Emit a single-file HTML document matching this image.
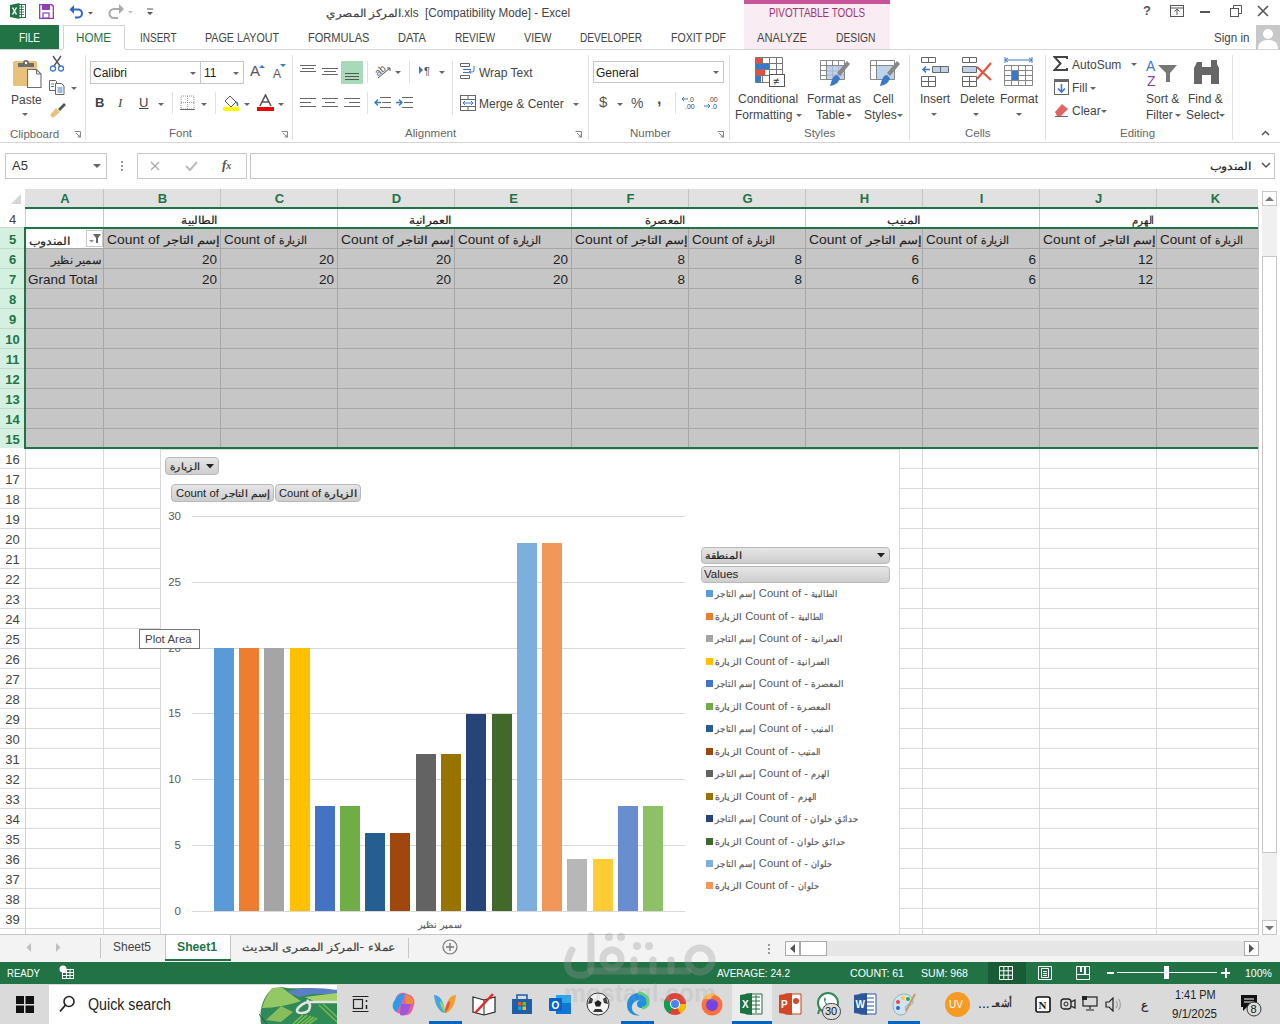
<!DOCTYPE html>
<html><head><meta charset="utf-8">
<style>
*{margin:0;padding:0;box-sizing:border-box}
html,body{width:1280px;height:1024px;overflow:hidden;background:#fff;font-family:"Liberation Sans",sans-serif;color:#444;position:relative}
.a{position:absolute}
.t{position:absolute;white-space:nowrap;font-size:12px;line-height:14px}
.tab{position:absolute;top:26px;height:25px;line-height:25px;font-size:12px;color:#444;white-space:nowrap}
.gl{position:absolute;top:127px;font-size:11.5px;color:#666;white-space:nowrap}
.sep{position:absolute;top:55px;width:1px;height:85px;background:#e1e1e1}
.dd{position:absolute;width:0;height:0;border-left:3px solid transparent;border-right:3px solid transparent;border-top:3px solid #666}
.ch{text-align:center;color:#217346;font-weight:bold;font-size:13px}
.rn{text-align:center;color:#444;font-size:13px}
.rn.sel{color:#217346;font-weight:bold}
.cell{font-size:13.5px;color:#1e1e1e;line-height:15px}
.fbtn{border:1px solid #b9b9b9;border-radius:4px;background:linear-gradient(#e6e6e6,#cdcdcd)}
.fbt{font-size:11.5px;color:#222}
.ylab{font-size:11.5px;color:#595959}
.leg{font-size:11px;color:#595959}
.ar{font-size:0.85em;-webkit-text-stroke:0.2px currentColor}
.ab{display:inline-block;white-space:nowrap}.ab>span{display:inline-block;transform-origin:0 0}
</style></head><body>
<!-- TITLE BAR -->
<div id="title">
 <svg class="a" style="left:10px;top:3px" width="16" height="16" viewBox="0 0 16 16">
  <rect x="6.5" y="1.5" width="9" height="13" fill="#fff" stroke="#217346" stroke-width="1"/>
  <path d="M9 4h5M9 6.5h5M9 9h5M9 11.5h5M11.5 2v12" stroke="#217346" stroke-width="0.9"/>
  <path d="M0 2l9.5-2v16L0 14z" fill="#217346"/>
  <path d="M2.5 4.5l4 7M6.5 4.5l-4 7" stroke="#fff" stroke-width="1.5"/>
 </svg>
 <svg class="a" style="left:39px;top:4px" width="15" height="15" viewBox="0 0 15 15">
  <path d="M0.5 0.5h12l2 2v12h-14z" fill="none" stroke="#8d3fb5" stroke-width="1.6"/>
  <rect x="3" y="1" width="8" height="5" fill="#8d3fb5"/><rect x="4" y="9" width="6" height="5" fill="#fff" stroke="#8d3fb5" stroke-width="1.2"/>
 </svg>
 <svg class="a" style="left:68px;top:3px" width="28" height="16" viewBox="0 0 28 16">
  <path d="M4 6.5h6a4 4 0 0 1 0 8H7" fill="none" stroke="#2b67c6" stroke-width="2"/>
  <path d="M1.5 6.5l4.5-4.5v9z" fill="#2b67c6"/>
  <path d="M20 9h5l-2.5 2.5z" fill="#555"/>
 </svg>
 <svg class="a" style="left:108px;top:3px" width="28" height="16" viewBox="0 0 28 16">
  <path d="M14 6H6a4.5 4.5 0 0 0 0 9h4" fill="none" stroke="#aaa" stroke-width="2"/>
  <path d="M16 6l-5-5v10z" fill="#aaa"/>
  <path d="M20 8h5l-2.5 2.5z" fill="#bbb"/>
 </svg>
 <svg class="a" style="left:145px;top:7px" width="10" height="10" viewBox="0 0 10 10">
  <path d="M2 2h6" stroke="#555" stroke-width="1"/><path d="M2 5h6l-3 3z" fill="#555"/>
 </svg>
 <div class="t fw" style="--w:75.0px;transform:scaleX(0.762);transform-origin:0 0;left:326px;top:6px;font-size:12.5px;color:#444"><span class="ar">المركز المصري</span></div><div class="t fw" style="--w:169.0px;transform:scaleX(0.936);transform-origin:0 0;left:401px;top:6px;font-size:12.5px;color:#444">.xls&nbsp; [Compatibility Mode] - Excel</div>
 <div class="a" style="left:744px;top:0;width:146px;height:49px;background:#f9ecf3"></div>
 <div class="a" style="left:744px;top:0;width:146px;height:4px;background:#c6559a"></div>
 <div class="t fw" style="--w:96.0px;transform:scaleX(0.822);transform-origin:0 0;left:768.5px;top:6px;color:#a3336f;font-size:12px">PIVOTTABLE TOOLS</div>
 <div class="t" style="left:1143px;top:4px;font-size:13px;color:#555;font-weight:bold">?</div>
 <svg class="a" style="left:1170px;top:5px" width="14" height="12" viewBox="0 0 14 12"><rect x="0.5" y="0.5" width="13" height="11" fill="none" stroke="#555"/><path d="M0.5 3h13" stroke="#555"/><path d="M7 4v6M4.5 6.5L7 4l2.5 2.5" fill="none" stroke="#555"/></svg>
 <div class="a" style="left:1200px;top:11px;width:10px;height:2px;background:#555"></div>
 <svg class="a" style="left:1230px;top:5px" width="12" height="12" viewBox="0 0 12 12"><rect x="0.5" y="3.5" width="8" height="8" fill="none" stroke="#555"/><path d="M3.5 3.5v-3h8v8h-3" fill="none" stroke="#555"/></svg>
 <svg class="a" style="left:1257px;top:5px" width="12" height="12" viewBox="0 0 12 12"><path d="M1 1l10 10M11 1L1 11" stroke="#555" stroke-width="1.6"/></svg>
</div>
<!-- TABS -->
<div class="a" style="left:0;top:25px;width:59px;height:25px;background:#217346"></div>
<div class="tab fw" style="--w:21.0px;transform:scaleX(0.829);transform-origin:0 0;left:19px;color:#fff">FILE</div>
<div class="a" style="left:63px;top:25px;width:62px;height:25px;border:1px solid #d4d4d4;border-bottom:none;background:#fff"></div>
<div class="tab fw" style="--w:35.0px;transform:scaleX(0.972);transform-origin:0 0;left:76px;color:#217346">HOME</div>
<div class="tab fw" style="--w:36.5px;transform:scaleX(0.833);transform-origin:0 0;left:140px">INSERT</div>
<div class="tab fw" style="--w:74.0px;transform:scaleX(0.892);transform-origin:0 0;left:205px">PAGE LAYOUT</div>
<div class="tab fw" style="--w:61.5px;transform:scaleX(0.922);transform-origin:0 0;left:308px">FORMULAS</div>
<div class="tab fw" style="--w:28.0px;transform:scaleX(0.926);transform-origin:0 0;left:398px">DATA</div>
<div class="tab fw" style="--w:40.0px;transform:scaleX(0.845);transform-origin:0 0;left:455px">REVIEW</div>
<div class="tab fw" style="--w:27.5px;transform:scaleX(0.897);transform-origin:0 0;left:523.5px">VIEW</div>
<div class="tab fw" style="--w:62.0px;transform:scaleX(0.845);transform-origin:0 0;left:580px">DEVELOPER</div>
<div class="tab fw" style="--w:55.0px;transform:scaleX(0.881);transform-origin:0 0;left:671px">FOXIT PDF</div>
<div class="tab fw" style="--w:50.0px;transform:scaleX(0.929);transform-origin:0 0;left:756.5px">ANALYZE</div>
<div class="tab fw" style="--w:39.5px;transform:scaleX(0.858);transform-origin:0 0;left:836px">DESIGN</div>
<div class="tab fw" style="--w:35.5px;transform:scaleX(0.967);transform-origin:0 0;left:1213.5px">Sign in</div>
<svg class="a" style="left:1256px;top:25px" width="24" height="24" viewBox="0 0 24 24"><rect width="24" height="24" fill="#c8c8c8"/><circle cx="12" cy="9" r="5" fill="#fff"/><path d="M2 24c0-7 5-9 10-9s10 2 10 9z" fill="#fff"/></svg>
<div class="a" style="left:0;top:49px;width:1280px;height:1px;background:#d4d4d4"></div>
<div class="a" style="left:63px;top:49px;width:62px;height:1px;background:#fff"></div>
<div id="grid"><div class="a" style="left:0;top:180px;width:1280px;height:755px;background:#fff"></div>
<div class="a" style="left:25px;top:189px;width:1233px;height:19px;background:#e1e1e1"></div>
<div class="a" style="left:0;top:189px;width:25px;height:19px;background:#fff"></div>
<svg class="a" style="left:10px;top:193px" width="12" height="12"><path d="M11 1v10H1z" fill="#d6d6d6"/></svg>
<div class="a" style="left:103px;top:189px;width:1px;height:19px;background:#c4c4c4"></div>
<div class="t ch" style="left:26px;width:78px;top:192px">A</div>
<div class="a" style="left:220px;top:189px;width:1px;height:19px;background:#c4c4c4"></div>
<div class="t ch" style="left:104px;width:117px;top:192px">B</div>
<div class="a" style="left:337px;top:189px;width:1px;height:19px;background:#c4c4c4"></div>
<div class="t ch" style="left:221px;width:117px;top:192px">C</div>
<div class="a" style="left:454px;top:189px;width:1px;height:19px;background:#c4c4c4"></div>
<div class="t ch" style="left:338px;width:117px;top:192px">D</div>
<div class="a" style="left:571px;top:189px;width:1px;height:19px;background:#c4c4c4"></div>
<div class="t ch" style="left:455px;width:117px;top:192px">E</div>
<div class="a" style="left:688px;top:189px;width:1px;height:19px;background:#c4c4c4"></div>
<div class="t ch" style="left:572px;width:117px;top:192px">F</div>
<div class="a" style="left:805px;top:189px;width:1px;height:19px;background:#c4c4c4"></div>
<div class="t ch" style="left:689px;width:117px;top:192px">G</div>
<div class="a" style="left:922px;top:189px;width:1px;height:19px;background:#c4c4c4"></div>
<div class="t ch" style="left:806px;width:117px;top:192px">H</div>
<div class="a" style="left:1039px;top:189px;width:1px;height:19px;background:#c4c4c4"></div>
<div class="t ch" style="left:923px;width:117px;top:192px">I</div>
<div class="a" style="left:1156px;top:189px;width:1px;height:19px;background:#c4c4c4"></div>
<div class="t ch" style="left:1040px;width:117px;top:192px">J</div>
<div class="a" style="left:1258px;top:189px;width:1px;height:19px;background:#c4c4c4"></div>
<div class="t ch" style="left:1157px;width:117px;top:192px">K</div>
<div class="a" style="left:0;top:228px;width:25px;height:220px;background:#d3f0e0"></div>
<div class="a" style="left:25px;top:228px;width:1233px;height:220px;background:#c6c6c6"></div>
<div class="a" style="left:26px;top:229px;width:77px;height:19px;background:#fff"></div>
<div class="a" style="left:25px;top:248px;width:1233px;height:1px;background:#a6a6a6"></div>
<div class="a" style="left:0;top:248px;width:25px;height:1px;background:#c4d9cc"></div>
<div class="a" style="left:25px;top:268px;width:1233px;height:1px;background:#a6a6a6"></div>
<div class="a" style="left:0;top:268px;width:25px;height:1px;background:#c4d9cc"></div>
<div class="a" style="left:25px;top:288px;width:1233px;height:1px;background:#a6a6a6"></div>
<div class="a" style="left:0;top:288px;width:25px;height:1px;background:#c4d9cc"></div>
<div class="a" style="left:25px;top:308px;width:1233px;height:1px;background:#a6a6a6"></div>
<div class="a" style="left:0;top:308px;width:25px;height:1px;background:#c4d9cc"></div>
<div class="a" style="left:25px;top:328px;width:1233px;height:1px;background:#a6a6a6"></div>
<div class="a" style="left:0;top:328px;width:25px;height:1px;background:#c4d9cc"></div>
<div class="a" style="left:25px;top:348px;width:1233px;height:1px;background:#a6a6a6"></div>
<div class="a" style="left:0;top:348px;width:25px;height:1px;background:#c4d9cc"></div>
<div class="a" style="left:25px;top:368px;width:1233px;height:1px;background:#a6a6a6"></div>
<div class="a" style="left:0;top:368px;width:25px;height:1px;background:#c4d9cc"></div>
<div class="a" style="left:25px;top:388px;width:1233px;height:1px;background:#a6a6a6"></div>
<div class="a" style="left:0;top:388px;width:25px;height:1px;background:#c4d9cc"></div>
<div class="a" style="left:25px;top:408px;width:1233px;height:1px;background:#a6a6a6"></div>
<div class="a" style="left:0;top:408px;width:25px;height:1px;background:#c4d9cc"></div>
<div class="a" style="left:25px;top:428px;width:1233px;height:1px;background:#a6a6a6"></div>
<div class="a" style="left:0;top:428px;width:25px;height:1px;background:#c4d9cc"></div>
<div class="a" style="left:0;top:468px;width:1258px;height:1px;background:#dadada"></div>
<div class="a" style="left:0;top:488px;width:1258px;height:1px;background:#dadada"></div>
<div class="a" style="left:0;top:508px;width:1258px;height:1px;background:#dadada"></div>
<div class="a" style="left:0;top:528px;width:1258px;height:1px;background:#dadada"></div>
<div class="a" style="left:0;top:548px;width:1258px;height:1px;background:#dadada"></div>
<div class="a" style="left:0;top:568px;width:1258px;height:1px;background:#dadada"></div>
<div class="a" style="left:0;top:588px;width:1258px;height:1px;background:#dadada"></div>
<div class="a" style="left:0;top:608px;width:1258px;height:1px;background:#dadada"></div>
<div class="a" style="left:0;top:628px;width:1258px;height:1px;background:#dadada"></div>
<div class="a" style="left:0;top:648px;width:1258px;height:1px;background:#dadada"></div>
<div class="a" style="left:0;top:668px;width:1258px;height:1px;background:#dadada"></div>
<div class="a" style="left:0;top:688px;width:1258px;height:1px;background:#dadada"></div>
<div class="a" style="left:0;top:708px;width:1258px;height:1px;background:#dadada"></div>
<div class="a" style="left:0;top:728px;width:1258px;height:1px;background:#dadada"></div>
<div class="a" style="left:0;top:748px;width:1258px;height:1px;background:#dadada"></div>
<div class="a" style="left:0;top:768px;width:1258px;height:1px;background:#dadada"></div>
<div class="a" style="left:0;top:788px;width:1258px;height:1px;background:#dadada"></div>
<div class="a" style="left:0;top:808px;width:1258px;height:1px;background:#dadada"></div>
<div class="a" style="left:0;top:828px;width:1258px;height:1px;background:#dadada"></div>
<div class="a" style="left:0;top:848px;width:1258px;height:1px;background:#dadada"></div>
<div class="a" style="left:0;top:868px;width:1258px;height:1px;background:#dadada"></div>
<div class="a" style="left:0;top:888px;width:1258px;height:1px;background:#dadada"></div>
<div class="a" style="left:0;top:908px;width:1258px;height:1px;background:#dadada"></div>
<div class="a" style="left:0;top:928px;width:1258px;height:1px;background:#dadada"></div>
<div class="a" style="left:103px;top:449px;width:1px;height:486px;background:#dadada"></div>
<div class="a" style="left:103px;top:248px;width:1px;height:200px;background:#a6a6a6"></div>
<div class="a" style="left:103px;top:228px;width:1px;height:20px;background:#a8a8a8"></div>
<div class="a" style="left:220px;top:449px;width:1px;height:486px;background:#dadada"></div>
<div class="a" style="left:220px;top:248px;width:1px;height:200px;background:#a6a6a6"></div>
<div class="a" style="left:220px;top:228px;width:1px;height:20px;background:#a8a8a8"></div>
<div class="a" style="left:337px;top:449px;width:1px;height:486px;background:#dadada"></div>
<div class="a" style="left:337px;top:248px;width:1px;height:200px;background:#a6a6a6"></div>
<div class="a" style="left:337px;top:228px;width:1px;height:20px;background:#a8a8a8"></div>
<div class="a" style="left:454px;top:449px;width:1px;height:486px;background:#dadada"></div>
<div class="a" style="left:454px;top:248px;width:1px;height:200px;background:#a6a6a6"></div>
<div class="a" style="left:454px;top:228px;width:1px;height:20px;background:#a8a8a8"></div>
<div class="a" style="left:571px;top:449px;width:1px;height:486px;background:#dadada"></div>
<div class="a" style="left:571px;top:248px;width:1px;height:200px;background:#a6a6a6"></div>
<div class="a" style="left:571px;top:228px;width:1px;height:20px;background:#a8a8a8"></div>
<div class="a" style="left:688px;top:449px;width:1px;height:486px;background:#dadada"></div>
<div class="a" style="left:688px;top:248px;width:1px;height:200px;background:#a6a6a6"></div>
<div class="a" style="left:688px;top:228px;width:1px;height:20px;background:#a8a8a8"></div>
<div class="a" style="left:805px;top:449px;width:1px;height:486px;background:#dadada"></div>
<div class="a" style="left:805px;top:248px;width:1px;height:200px;background:#a6a6a6"></div>
<div class="a" style="left:805px;top:228px;width:1px;height:20px;background:#a8a8a8"></div>
<div class="a" style="left:922px;top:449px;width:1px;height:486px;background:#dadada"></div>
<div class="a" style="left:922px;top:248px;width:1px;height:200px;background:#a6a6a6"></div>
<div class="a" style="left:922px;top:228px;width:1px;height:20px;background:#a8a8a8"></div>
<div class="a" style="left:1039px;top:449px;width:1px;height:486px;background:#dadada"></div>
<div class="a" style="left:1039px;top:248px;width:1px;height:200px;background:#a6a6a6"></div>
<div class="a" style="left:1039px;top:228px;width:1px;height:20px;background:#a8a8a8"></div>
<div class="a" style="left:1156px;top:449px;width:1px;height:486px;background:#dadada"></div>
<div class="a" style="left:1156px;top:248px;width:1px;height:200px;background:#a6a6a6"></div>
<div class="a" style="left:1156px;top:228px;width:1px;height:20px;background:#a8a8a8"></div>
<div class="a" style="left:103px;top:208px;width:1px;height:20px;background:#c8c8c8"></div>
<div class="a" style="left:337px;top:208px;width:1px;height:20px;background:#c8c8c8"></div>
<div class="a" style="left:571px;top:208px;width:1px;height:20px;background:#c8c8c8"></div>
<div class="a" style="left:805px;top:208px;width:1px;height:20px;background:#c8c8c8"></div>
<div class="a" style="left:1039px;top:208px;width:1px;height:20px;background:#c8c8c8"></div>
<div class="a" style="left:25px;top:449px;width:1px;height:486px;background:#d0d0d0"></div>
<div class="a" style="left:25px;top:208px;width:1px;height:20px;background:#d0d0d0"></div>
<div class="a" style="left:0;top:227px;width:25px;height:1px;background:#d0d0d0"></div>
<div class="a" style="left:25px;top:207px;width:1233px;height:2px;background:#217346"></div>
<div class="a" style="left:24px;top:227px;width:1234px;height:2px;background:#217346"></div>
<div class="a" style="left:24px;top:447px;width:1234px;height:2px;background:#217346"></div>
<div class="a" style="left:24px;top:227px;width:2px;height:222px;background:#217346"></div>
<div class="t rn" style="left:0;width:25px;top:213px">4</div>
<div class="t rn sel" style="left:0;width:25px;top:233px">5</div>
<div class="t rn sel" style="left:0;width:25px;top:253px">6</div>
<div class="t rn sel" style="left:0;width:25px;top:273px">7</div>
<div class="t rn sel" style="left:0;width:25px;top:293px">8</div>
<div class="t rn sel" style="left:0;width:25px;top:313px">9</div>
<div class="t rn sel" style="left:0;width:25px;top:333px">10</div>
<div class="t rn sel" style="left:0;width:25px;top:353px">11</div>
<div class="t rn sel" style="left:0;width:25px;top:373px">12</div>
<div class="t rn sel" style="left:0;width:25px;top:393px">13</div>
<div class="t rn sel" style="left:0;width:25px;top:413px">14</div>
<div class="t rn sel" style="left:0;width:25px;top:433px">15</div>
<div class="t rn" style="left:0;width:25px;top:453px">16</div>
<div class="t rn" style="left:0;width:25px;top:473px">17</div>
<div class="t rn" style="left:0;width:25px;top:493px">18</div>
<div class="t rn" style="left:0;width:25px;top:513px">19</div>
<div class="t rn" style="left:0;width:25px;top:533px">20</div>
<div class="t rn" style="left:0;width:25px;top:553px">21</div>
<div class="t rn" style="left:0;width:25px;top:573px">22</div>
<div class="t rn" style="left:0;width:25px;top:593px">23</div>
<div class="t rn" style="left:0;width:25px;top:613px">24</div>
<div class="t rn" style="left:0;width:25px;top:633px">25</div>
<div class="t rn" style="left:0;width:25px;top:653px">26</div>
<div class="t rn" style="left:0;width:25px;top:673px">27</div>
<div class="t rn" style="left:0;width:25px;top:693px">28</div>
<div class="t rn" style="left:0;width:25px;top:713px">29</div>
<div class="t rn" style="left:0;width:25px;top:733px">30</div>
<div class="t rn" style="left:0;width:25px;top:753px">31</div>
<div class="t rn" style="left:0;width:25px;top:773px">32</div>
<div class="t rn" style="left:0;width:25px;top:793px">33</div>
<div class="t rn" style="left:0;width:25px;top:813px">34</div>
<div class="t rn" style="left:0;width:25px;top:833px">35</div>
<div class="t rn" style="left:0;width:25px;top:853px">36</div>
<div class="t rn" style="left:0;width:25px;top:873px">37</div>
<div class="t rn" style="left:0;width:25px;top:893px">38</div>
<div class="t rn" style="left:0;width:25px;top:913px">39</div>
<div class="t cell fw" style="--w:36.5px;transform:scaleX(0.530);transform-origin:0 0;left:181px;top:212px"><span class="ar">الطالبية</span></div>
<div class="t cell fw" style="--w:42.5px;transform:scaleX(0.549);transform-origin:0 0;left:409px;top:212px"><span class="ar">العمرانية</span></div>
<div class="t cell fw" style="--w:40.2px;transform:scaleX(0.668);transform-origin:0 0;left:645.3px;top:212px"><span class="ar">المعصرة</span></div>
<div class="t cell fw" style="--w:33.5px;transform:scaleX(0.649);transform-origin:0 0;left:886.5px;top:212px"><span class="ar">المنيب</span></div>
<div class="t cell fw" style="--w:22.0px;transform:scaleX(0.511);transform-origin:0 0;left:1131.5px;top:212px"><span class="ar">الهرم</span></div>
<div class="t cell fw" style="--w:41.0px;transform:scaleX(0.681);transform-origin:0 0;left:28.5px;top:233px"><span class="ar">المندوب</span></div>
<div class="a" style="left:86px;top:230px;width:17px;height:17px;background:#fff;border:1px solid #c8c8c8"></div>
<svg class="a" style="left:88px;top:233px" width="14" height="11" viewBox="0 0 14 11"><path d="M5 1h8l-3 4v5h-2v-5z" fill="#666"/><path d="M1 7h5l-2.5 2.5z" fill="#888"/></svg>
<div class="t cell fw" style="--w:112.5px;transform:scaleX(1.029);transform-origin:0 0;left:106.5px;top:232px">Count of <span class="ar ab" style="width:54.5px"><span style="transform:scaleX(0.676)">إسم التاجر</span></span></div>
<div class="t cell fw" style="--w:82.5px;transform:scaleX(0.999);transform-origin:0 0;left:223.5px;top:232px">Count of <span class="ar ab" style="width:27.8px"><span style="transform:scaleX(0.462)">الزيارة</span></span></div>
<div class="t cell fw" style="--w:112.5px;transform:scaleX(1.029);transform-origin:0 0;left:340.5px;top:232px">Count of <span class="ar ab" style="width:54.5px"><span style="transform:scaleX(0.676)">إسم التاجر</span></span></div>
<div class="t cell fw" style="--w:82.5px;transform:scaleX(0.999);transform-origin:0 0;left:457.5px;top:232px">Count of <span class="ar ab" style="width:27.8px"><span style="transform:scaleX(0.462)">الزيارة</span></span></div>
<div class="t cell fw" style="--w:112.5px;transform:scaleX(1.029);transform-origin:0 0;left:574.5px;top:232px">Count of <span class="ar ab" style="width:54.5px"><span style="transform:scaleX(0.676)">إسم التاجر</span></span></div>
<div class="t cell fw" style="--w:82.5px;transform:scaleX(0.999);transform-origin:0 0;left:691.5px;top:232px">Count of <span class="ar ab" style="width:27.8px"><span style="transform:scaleX(0.462)">الزيارة</span></span></div>
<div class="t cell fw" style="--w:112.5px;transform:scaleX(1.029);transform-origin:0 0;left:808.5px;top:232px">Count of <span class="ar ab" style="width:54.5px"><span style="transform:scaleX(0.676)">إسم التاجر</span></span></div>
<div class="t cell fw" style="--w:82.5px;transform:scaleX(0.999);transform-origin:0 0;left:925.5px;top:232px">Count of <span class="ar ab" style="width:27.8px"><span style="transform:scaleX(0.462)">الزيارة</span></span></div>
<div class="t cell fw" style="--w:112.5px;transform:scaleX(1.029);transform-origin:0 0;left:1042.5px;top:232px">Count of <span class="ar ab" style="width:54.5px"><span style="transform:scaleX(0.676)">إسم التاجر</span></span></div>
<div class="a" style="left:1157px;top:229px;width:101px;height:19px;overflow:hidden"><div class="t cell fw" style="--w:82.5px;transform:scaleX(0.999);transform-origin:0 0;left:2.5px;top:3px">Count of <span class="ar ab" style="width:27.8px"><span style="transform:scaleX(0.462)">الزيارة</span></span></div></div>
<div class="t cell fw" style="--w:50.0px;transform:scaleX(0.694);transform-origin:0 0;left:51px;top:252px"><span class="ar">سمير نظير</span></div>
<div class="t cell" style="left:28px;top:272px">Grand Total</div>
<div class="t cell" style="left:160px;width:57px;top:252px;text-align:right">20</div>
<div class="t cell" style="left:160px;width:57px;top:272px;text-align:right">20</div>
<div class="t cell" style="left:277px;width:57px;top:252px;text-align:right">20</div>
<div class="t cell" style="left:277px;width:57px;top:272px;text-align:right">20</div>
<div class="t cell" style="left:394px;width:57px;top:252px;text-align:right">20</div>
<div class="t cell" style="left:394px;width:57px;top:272px;text-align:right">20</div>
<div class="t cell" style="left:511px;width:57px;top:252px;text-align:right">20</div>
<div class="t cell" style="left:511px;width:57px;top:272px;text-align:right">20</div>
<div class="t cell" style="left:628px;width:57px;top:252px;text-align:right">8</div>
<div class="t cell" style="left:628px;width:57px;top:272px;text-align:right">8</div>
<div class="t cell" style="left:745px;width:57px;top:252px;text-align:right">8</div>
<div class="t cell" style="left:745px;width:57px;top:272px;text-align:right">8</div>
<div class="t cell" style="left:862px;width:57px;top:252px;text-align:right">6</div>
<div class="t cell" style="left:862px;width:57px;top:272px;text-align:right">6</div>
<div class="t cell" style="left:979px;width:57px;top:252px;text-align:right">6</div>
<div class="t cell" style="left:979px;width:57px;top:272px;text-align:right">6</div>
<div class="t cell" style="left:1096px;width:57px;top:252px;text-align:right">12</div>
<div class="t cell" style="left:1096px;width:57px;top:272px;text-align:right">12</div></div>
<div id="chart"><div class="a" style="left:160px;top:449px;width:740px;height:486px;background:#fff;border-left:1px solid #d9d9d9;border-top:1px solid #d9d9d9;border-right:1px solid #d9d9d9"></div>
<div class="a fbtn" style="left:165px;top:457px;width:54px;height:18px"></div>
<div class="t fbt fw" style="--w:30.0px;transform:scaleX(0.585);transform-origin:0 0;left:170px;top:459px"><span class="ar">الزيارة</span></div>
<svg class="a" style="left:206px;top:464px" width="8" height="5"><path d="M0 0h8l-4 4.5z" fill="#222"/></svg>
<div class="a fbtn" style="left:171px;top:484px;width:103px;height:18px"></div>
<div class="t fbt fw" style="--w:93.4px;transform:scaleX(0.987);transform-origin:0 0;left:175.6px;top:486px">Count of <span class="ar ab" style="width:48.0px"><span style="transform:scaleX(0.699)">إسم التاجر</span></span></div>
<div class="a fbtn" style="left:275px;top:484px;width:86px;height:18px"></div>
<div class="t fbt fw" style="--w:78.0px;transform:scaleX(0.967);transform-origin:0 0;left:278.5px;top:486px">Count of <span class="ar ab" style="width:34.0px"><span style="transform:scaleX(0.663)">الزيارة</span></span></div>
<div class="a" style="left:192px;top:911px;width:493px;height:1px;background:#d9d9d9"></div>
<div class="t ylab" style="left:150px;width:31px;top:904px;text-align:right">0</div>
<div class="a" style="left:192px;top:845px;width:493px;height:1px;background:#d9d9d9"></div>
<div class="t ylab" style="left:150px;width:31px;top:838px;text-align:right">5</div>
<div class="a" style="left:192px;top:779px;width:493px;height:1px;background:#d9d9d9"></div>
<div class="t ylab" style="left:150px;width:31px;top:772px;text-align:right">10</div>
<div class="a" style="left:192px;top:713px;width:493px;height:1px;background:#d9d9d9"></div>
<div class="t ylab" style="left:150px;width:31px;top:706px;text-align:right">15</div>
<div class="a" style="left:192px;top:648px;width:493px;height:1px;background:#d9d9d9"></div>
<div class="t ylab" style="left:150px;width:31px;top:641px;text-align:right">20</div>
<div class="a" style="left:192px;top:582px;width:493px;height:1px;background:#d9d9d9"></div>
<div class="t ylab" style="left:150px;width:31px;top:575px;text-align:right">25</div>
<div class="a" style="left:192px;top:516px;width:493px;height:1px;background:#d9d9d9"></div>
<div class="t ylab" style="left:150px;width:31px;top:509px;text-align:right">30</div>
<div class="a" style="left:214px;top:648px;width:20px;height:263px;background:#5b9bd5"></div>
<div class="a" style="left:239px;top:648px;width:20px;height:263px;background:#ed7d31"></div>
<div class="a" style="left:264px;top:648px;width:20px;height:263px;background:#a5a5a5"></div>
<div class="a" style="left:290px;top:648px;width:20px;height:263px;background:#ffc000"></div>
<div class="a" style="left:315px;top:806px;width:20px;height:105px;background:#4472c4"></div>
<div class="a" style="left:340px;top:806px;width:20px;height:105px;background:#70ad47"></div>
<div class="a" style="left:365px;top:833px;width:20px;height:78px;background:#255e91"></div>
<div class="a" style="left:390px;top:833px;width:20px;height:78px;background:#9e480e"></div>
<div class="a" style="left:416px;top:754px;width:20px;height:157px;background:#636363"></div>
<div class="a" style="left:441px;top:754px;width:20px;height:157px;background:#997300"></div>
<div class="a" style="left:466px;top:714px;width:20px;height:197px;background:#264478"></div>
<div class="a" style="left:492px;top:714px;width:20px;height:197px;background:#43682b"></div>
<div class="a" style="left:517px;top:543px;width:20px;height:368px;background:#7cafdd"></div>
<div class="a" style="left:542px;top:543px;width:20px;height:368px;background:#f1975a"></div>
<div class="a" style="left:567px;top:859px;width:20px;height:52px;background:#b7b7b7"></div>
<div class="a" style="left:593px;top:859px;width:20px;height:52px;background:#ffcd33"></div>
<div class="a" style="left:618px;top:806px;width:20px;height:105px;background:#698ed0"></div>
<div class="a" style="left:643px;top:806px;width:20px;height:105px;background:#8cc168"></div>
<div class="t fw" style="--w:44.0px;transform:scaleX(0.750);transform-origin:0 0;left:418px;top:917px;font-size:11px;color:#595959"><span class="ar">سمير نظير</span></div>
<div class="a fbtn" style="left:701px;top:547px;width:189px;height:17px"></div>
<div class="t fbt fw" style="--w:37.0px;transform:scaleX(0.722);transform-origin:0 0;left:705px;top:548px"><span class="ar">المنطقة</span></div>
<svg class="a" style="left:877px;top:553px" width="8" height="5"><path d="M0 0h8l-4 4.5z" fill="#222"/></svg>
<div class="a fbtn" style="left:701px;top:566px;width:189px;height:17px"></div>
<div class="t fbt" style="left:704px;top:567px">Values</div>
<div class="a" style="left:706px;top:590px;width:7px;height:7px;background:#5b9bd5"></div>
<div class="t leg fw" style="--w:123.0px;transform:scaleX(1.017);transform-origin:0 0;left:715px;top:586px"><span class="ar ab" style="width:40.0px"><span style="transform:scaleX(0.609)">إسم التاجر</span></span> Count of - <span class="ar ab" style="width:26.5px"><span style="transform:scaleX(0.473)">الطالبية</span></span></div>
<div class="a" style="left:706px;top:613px;width:7px;height:7px;background:#ed7d31"></div>
<div class="t leg fw" style="--w:109.0px;transform:scaleX(1.019);transform-origin:0 0;left:715px;top:609px"><span class="ar ab" style="width:26.5px"><span style="transform:scaleX(0.540)">الزيارة</span></span> Count of - <span class="ar ab" style="width:26.0px"><span style="transform:scaleX(0.464)">الطالبية</span></span></div>
<div class="a" style="left:706px;top:635px;width:7px;height:7px;background:#a5a5a5"></div>
<div class="t leg fw" style="--w:128.0px;transform:scaleX(1.017);transform-origin:0 0;left:715px;top:631px"><span class="ar ab" style="width:40.0px"><span style="transform:scaleX(0.609)">إسم التاجر</span></span> Count of - <span class="ar ab" style="width:31.5px"><span style="transform:scaleX(0.499)">العمرانية</span></span></div>
<div class="a" style="left:706px;top:658px;width:7px;height:7px;background:#ffc000"></div>
<div class="t leg fw" style="--w:115.0px;transform:scaleX(1.018);transform-origin:0 0;left:715px;top:654px"><span class="ar ab" style="width:26.5px"><span style="transform:scaleX(0.540)">الزيارة</span></span> Count of - <span class="ar ab" style="width:32.0px"><span style="transform:scaleX(0.507)">العمرانية</span></span></div>
<div class="a" style="left:706px;top:680px;width:7px;height:7px;background:#4472c4"></div>
<div class="t leg fw" style="--w:129.0px;transform:scaleX(1.016);transform-origin:0 0;left:715px;top:676px"><span class="ar ab" style="width:40.0px"><span style="transform:scaleX(0.609)">إسم التاجر</span></span> Count of - <span class="ar ab" style="width:32.5px"><span style="transform:scaleX(0.662)">المعصرة</span></span></div>
<div class="a" style="left:706px;top:703px;width:7px;height:7px;background:#70ad47"></div>
<div class="t leg fw" style="--w:116.0px;transform:scaleX(1.018);transform-origin:0 0;left:715px;top:699px"><span class="ar ab" style="width:26.5px"><span style="transform:scaleX(0.540)">الزيارة</span></span> Count of - <span class="ar ab" style="width:33.0px"><span style="transform:scaleX(0.673)">المعصرة</span></span></div>
<div class="a" style="left:706px;top:725px;width:7px;height:7px;background:#255e91"></div>
<div class="t leg fw" style="--w:119.0px;transform:scaleX(1.018);transform-origin:0 0;left:715px;top:721px"><span class="ar ab" style="width:40.0px"><span style="transform:scaleX(0.609)">إسم التاجر</span></span> Count of - <span class="ar ab" style="width:22.5px"><span style="transform:scaleX(0.535)">المنيب</span></span></div>
<div class="a" style="left:706px;top:748px;width:7px;height:7px;background:#9e480e"></div>
<div class="t leg fw" style="--w:106.0px;transform:scaleX(1.020);transform-origin:0 0;left:715px;top:744px"><span class="ar ab" style="width:26.5px"><span style="transform:scaleX(0.540)">الزيارة</span></span> Count of - <span class="ar ab" style="width:23.0px"><span style="transform:scaleX(0.547)">المنيب</span></span></div>
<div class="a" style="left:706px;top:770px;width:7px;height:7px;background:#636363"></div>
<div class="t leg fw" style="--w:115.0px;transform:scaleX(1.018);transform-origin:0 0;left:715px;top:766px"><span class="ar ab" style="width:40.0px"><span style="transform:scaleX(0.609)">إسم التاجر</span></span> Count of - <span class="ar ab" style="width:18.5px"><span style="transform:scaleX(0.528)">الهرم</span></span></div>
<div class="a" style="left:706px;top:793px;width:7px;height:7px;background:#997300"></div>
<div class="t leg fw" style="--w:102.0px;transform:scaleX(1.021);transform-origin:0 0;left:715px;top:789px"><span class="ar ab" style="width:26.5px"><span style="transform:scaleX(0.540)">الزيارة</span></span> Count of - <span class="ar ab" style="width:19.0px"><span style="transform:scaleX(0.542)">الهرم</span></span></div>
<div class="a" style="left:706px;top:815px;width:7px;height:7px;background:#264478"></div>
<div class="t leg fw" style="--w:144.0px;transform:scaleX(1.015);transform-origin:0 0;left:715px;top:811px"><span class="ar ab" style="width:40.0px"><span style="transform:scaleX(0.609)">إسم التاجر</span></span> Count of - <span class="ar ab" style="width:47.5px"><span style="transform:scaleX(0.653)">حدائق حلوان</span></span></div>
<div class="a" style="left:706px;top:838px;width:7px;height:7px;background:#43682b"></div>
<div class="t leg fw" style="--w:131.0px;transform:scaleX(1.016);transform-origin:0 0;left:715px;top:834px"><span class="ar ab" style="width:26.5px"><span style="transform:scaleX(0.540)">الزيارة</span></span> Count of - <span class="ar ab" style="width:48.0px"><span style="transform:scaleX(0.660)">حدائق حلوان</span></span></div>
<div class="a" style="left:706px;top:860px;width:7px;height:7px;background:#7cafdd"></div>
<div class="t leg fw" style="--w:118.0px;transform:scaleX(1.018);transform-origin:0 0;left:715px;top:856px"><span class="ar ab" style="width:40.0px"><span style="transform:scaleX(0.609)">إسم التاجر</span></span> Count of - <span class="ar ab" style="width:21.5px"><span style="transform:scaleX(0.613)">حلوان</span></span></div>
<div class="a" style="left:706px;top:882px;width:7px;height:7px;background:#f1975a"></div>
<div class="t leg fw" style="--w:104.0px;transform:scaleX(1.020);transform-origin:0 0;left:715px;top:878px"><span class="ar ab" style="width:26.5px"><span style="transform:scaleX(0.540)">الزيارة</span></span> Count of - <span class="ar ab" style="width:21.0px"><span style="transform:scaleX(0.599)">حلوان</span></span></div>
<div class="a" style="left:139px;top:629px;width:61px;height:20px;background:#fff;border:1px solid #767676"></div>
<div class="t" style="left:145px;top:632px;font-size:11.5px;color:#444">Plot Area</div></div>
<div id="bottom"><div class="a" style="left:1258px;top:189px;width:22px;height:746px;background:#fff"></div>
<div class="a" style="left:1258px;top:208px;width:1px;height:727px;background:#c6c6c6"></div>
<div class="a" style="left:1262px;top:206px;width:15px;height:714px;background:#f0f0f0"></div>
<div class="a" style="left:1262px;top:191px;width:15px;height:15px;background:#fff;border:1px solid #c6c6c6"></div>
<svg class="a" style="left:1265px;top:196px" width="9" height="5"><path d="M0 5l4.5-4.5L9 5z" fill="#777"/></svg>
<div class="a" style="left:1262px;top:256px;width:15px;height:597px;background:#fff;border:1px solid #c6c6c6"></div>
<div class="a" style="left:1262px;top:920px;width:15px;height:15px;background:#fff;border:1px solid #c6c6c6"></div>
<svg class="a" style="left:1265px;top:926px" width="9" height="5"><path d="M0 0h9L4.5 4.5z" fill="#777"/></svg>
<div class="a" style="left:0;top:934px;width:1258px;height:1px;background:#c6c6c6"></div>
<div class="a" style="left:0;top:935px;width:1280px;height:27px;background:#f3f3f3"></div>
<svg class="a" style="left:26px;top:943px" width="6" height="9"><path d="M5 0v9L0.5 4.5z" fill="#c0c0c0"/></svg>
<svg class="a" style="left:55px;top:943px" width="6" height="9"><path d="M1 0v9l4.5-4.5z" fill="#c0c0c0"/></svg>
<div class="a" style="left:100px;top:938px;width:1px;height:20px;background:#c6c6c6"></div>
<div class="t fw" style="--w:38.0px;transform:scaleX(0.922);transform-origin:0 0;left:113px;top:940px;font-size:13px;color:#444">Sheet5</div>
<div class="a" style="left:165px;top:935px;width:66px;height:26px;background:#fff;border-left:1px solid #c6c6c6;border-right:1px solid #c6c6c6"></div>
<div class="a" style="left:165px;top:959px;width:66px;height:2px;background:#217346"></div>
<div class="t fw" style="--w:40.0px;transform:scaleX(0.938);transform-origin:0 0;left:177px;top:940px;font-size:13px;color:#217346;font-weight:bold">Sheet1</div>
<div class="t fw" style="--w:154.0px;transform:scaleX(0.752);transform-origin:0 0;left:242px;top:940px;font-size:13px;color:#444" dir="rtl"><span class="ar">عملاء</span> -<span class="ar">المركز المصرى الحديث</span></div>
<div class="a" style="left:408px;top:938px;width:1px;height:20px;background:#c6c6c6"></div>
<svg class="a" style="left:442px;top:939px" width="16" height="16"><circle cx="8" cy="8" r="7" fill="none" stroke="#777" stroke-width="1.2"/><path d="M8 4v8M4 8h8" stroke="#777" stroke-width="1.4"/></svg>
<div class="a" style="left:768px;top:944px;width:2px;height:2px;background:#999"></div>
<div class="a" style="left:768px;top:948px;width:2px;height:2px;background:#999"></div>
<div class="a" style="left:768px;top:952px;width:2px;height:2px;background:#999"></div>
<div class="a" style="left:785px;top:941px;width:459px;height:15px;background:#e6e6e6"></div>
<div class="a" style="left:785px;top:941px;width:15px;height:15px;background:#fff;border:1px solid #aaa"></div>
<svg class="a" style="left:790px;top:944px" width="5" height="9"><path d="M5 0v9L0 4.5z" fill="#555"/></svg>
<div class="a" style="left:800px;top:941px;width:27px;height:15px;background:#fff;border:1px solid #aaa"></div>
<div class="a" style="left:1244px;top:941px;width:15px;height:15px;background:#fff;border:1px solid #aaa"></div>
<svg class="a" style="left:1249px;top:944px" width="5" height="9"><path d="M0 0v9l5-4.5z" fill="#555"/></svg>
<div class="a" style="left:0;top:962px;width:1280px;height:22px;background:#217346"></div>
<div class="t fw" style="--w:33.0px;transform:scaleX(0.833);transform-origin:0 0;left:7px;font-size:11.5px;color:#fff;top:966px">READY</div>
<svg class="a" style="left:59px;top:965px" width="15" height="14" viewBox="0 0 15 14"><rect x="3.5" y="4.5" width="11" height="9" fill="none" stroke="#fff"/><path d="M3.5 7.5h11M3.5 10.5h11M7.5 4.5v9M11 4.5v9" stroke="#fff"/><circle cx="4" cy="4" r="3.5" fill="#fff"/></svg>
<div class="t fw" style="--w:73.0px;transform:scaleX(0.874);transform-origin:0 0;left:717px;font-size:11.5px;color:#fff;top:966px">AVERAGE: 24.2</div>
<div class="t fw" style="--w:54.0px;transform:scaleX(0.918);transform-origin:0 0;left:849.5px;font-size:11.5px;color:#fff;top:966px">COUNT: 61</div>
<div class="t fw" style="--w:47.0px;transform:scaleX(0.919);transform-origin:0 0;left:921px;font-size:11.5px;color:#fff;top:966px">SUM: 968</div>
<div class="a" style="left:988px;top:962px;width:38px;height:22px;background:#185c37"></div>
<svg class="a" style="left:999px;top:966px" width="14" height="14"><path d="M0.5 0.5h13v13h-13zM0.5 4.8h13M0.5 9.2h13M4.8 0.5v13M9.2 0.5v13" fill="none" stroke="#fff"/></svg>
<svg class="a" style="left:1038px;top:966px" width="14" height="14"><path d="M0.5 0.5h13v13h-13z" fill="none" stroke="#fff"/><path d="M3.5 2.5h7v9h-7z" fill="none" stroke="#fff"/><path d="M5 5.5h4M5 7.5h4M5 9.5h4" stroke="#fff"/></svg>
<svg class="a" style="left:1076px;top:966px" width="14" height="14"><path d="M0.5 0.5h13v13h-13z" fill="none" stroke="#fff"/><rect x="4" y="0" width="2" height="6" fill="#fff"/><rect x="8" y="0" width="2" height="8" fill="#fff"/><path d="M0 8.5h14" stroke="#fff"/></svg>
<div class="a" style="left:1107px;top:972px;width:7px;height:2px;background:#fff"></div>
<div class="a" style="left:1117px;top:972px;width:100px;height:1px;background:#fff"></div>
<div class="a" style="left:1164px;top:966px;width:5px;height:13px;background:#fff"></div>
<div class="a" style="left:1221px;top:972px;width:9px;height:2px;background:#fff"></div>
<div class="a" style="left:1224.5px;top:968px;width:2px;height:10px;background:#fff"></div>
<div class="t fw" style="--w:27.0px;transform:scaleX(0.918);transform-origin:0 0;left:1244.5px;font-size:11.5px;color:#fff;top:966px">100%</div>
<div class="a" style="left:0;top:984px;width:1280px;height:40px;background:#dadada"></div>
<svg class="a" style="left:16px;top:996px" width="18" height="17"><path d="M0 0h8v8H0zM9.5 0H18v8H9.5zM0 9.5h8V17H0zM9.5 9.5H18V17H9.5z" fill="#111"/></svg>
<div class="a" style="left:49px;top:985px;width:288px;height:39px;background:#fff"></div>
<svg class="a" style="left:59px;top:995px" width="16" height="18"><circle cx="10" cy="6.5" r="5" fill="none" stroke="#222" stroke-width="1.6"/><path d="M6.5 10l-5.5 6.5" stroke="#222" stroke-width="1.8"/></svg>
<div class="t fw" style="--w:83.0px;transform:scaleX(0.889);transform-origin:0 0;left:88px;top:995px;font-size:16px;line-height:19px;color:#222">Quick search</div>
<svg class="a" style="left:259px;top:984px" width="78" height="40" viewBox="0 0 78 40">
<path d="M2 40C0 28 3 14 12 6L22 3C30 5 38 4 46 4L78 7V40Z" fill="#2f8a57"/>
<path d="M3 24C6 14 10 8 13 4L22 3C29 8 34 12 42 17C30 21 16 24 3 24Z" fill="#93c865"/>
<path d="M7 36L22 22L34 28L22 38Z" fill="#86be5e"/>
<path d="M28 8C40 3 60 3 78 6V11C62 9 50 10 40 13Z" fill="#5b7fc4"/>
<path d="M46 13L78 9V18L57 18Z" fill="#a6d06a"/>
<path d="M78 18H50C45 18 39 23 38 26C37 30 47 30 50 26C52 22 51 19 48 16" fill="none" stroke="#e4e4e4" stroke-width="2.6"/>
<path d="M34 40L44 31M38 40L48 31M42 40L52 32M46 40L55 33M50 40L58 34" stroke="#7cbc4a" stroke-width="1.6"/>
<path d="M60 21L78 38M64 20L78 33" stroke="#78b84c" stroke-width="1.6"/>
<path d="M0 30C3 34 6 38 8 40" stroke="#1f5f3f" stroke-width="1" fill="none"/>
</svg>
<svg class="a" style="left:352px;top:996px" width="17" height="16"><path d="M0.5 0.5h16M0.5 15.5h16" stroke="#222" stroke-width="1.2"/><rect x="1.5" y="3.5" width="9" height="9" fill="none" stroke="#222" stroke-width="1.2"/><path d="M14.5 4v2M14.5 9v4" stroke="#222" stroke-width="1.5"/></svg>
<svg class="a" style="left:391px;top:991px" width="26" height="26" viewBox="0 0 26 26"><path d="M5 6c2-4 6-5 9-4l5 2c4 2 5 6 4 10l-2 6c-2 4-6 5-9 4l-5-2c-4-2-5-6-4-10z" fill="#e45fa3"/><path d="M6 6c2-3 5-4 8-3l-4 10-5 8c-3-2-4-5-3-9z" fill="#2f9be8"/><path d="M14 3l6 3c2 2 3 4 2 7l-7 0z" fill="#f08b3b"/><path d="M10 13h10l-3 8c-2 3-5 4-8 3z" fill="#9a57d8"/></svg>
<svg class="a" style="left:432px;top:991px" width="26" height="26" viewBox="0 0 26 26"><path d="M2 4c6 0 10 6 11 18C9 22 3 16 2 4z" fill="#3fa6e8"/><path d="M24 4c-6 0-10 6-11 18 4 0 10-6 11-18z" fill="#f0a030"/><path d="M8 10c3 1 5 6 5 12-3-3-5-7-5-12z" fill="#9bd160"/><path d="M18 10c-3 1-5 6-5 12 3-3 5-7 5-12z" fill="#e5533c"/></svg>
<svg class="a" style="left:471px;top:991px" width="26" height="26" viewBox="0 0 26 26"><path d="M2 6l11 3 11-3v15l-11 3-11-3z" fill="#fff" stroke="#222" stroke-width="1.2"/><path d="M13 9v15" stroke="#222"/><path d="M4 22L22 3" stroke="#e22" stroke-width="2.4"/><path d="M4 4l18 18" stroke="#e22" stroke-width="2.4" opacity="0"/></svg>
<svg class="a" style="left:509px;top:991px" width="26" height="26" viewBox="0 0 26 26"><path d="M3 8h20v15H3z" fill="#1f5fa8"/><path d="M8 8V4h10v4" fill="none" stroke="#1f5fa8" stroke-width="1.6"/><rect x="9" y="11" width="3.5" height="3.5" fill="#f35325"/><rect x="13.5" y="11" width="3.5" height="3.5" fill="#81bc06"/><rect x="9" y="15.5" width="3.5" height="3.5" fill="#05a6f0"/><rect x="13.5" y="15.5" width="3.5" height="3.5" fill="#ffba08"/></svg>
<svg class="a" style="left:547px;top:991px" width="26" height="26" viewBox="0 0 26 26"><path d="M9 4h15v17H9z" fill="#28a8ea"/><path d="M9 12l15 0v11H9z" fill="#0f78d4"/><rect x="2" y="7" width="13" height="13" rx="1" fill="#0a64c8"/><text x="4.5" y="17.5" font-size="10" font-weight="bold" fill="#fff" font-family="Liberation Sans">O</text></svg>
<svg class="a" style="left:585px;top:991px" width="26" height="26" viewBox="0 0 26 26"><circle cx="13" cy="13" r="11" fill="#f4f4f4" stroke="#333"/><path d="M13 9l3.5 2.5-1.3 4h-4.4l-1.3-4z" fill="#222"/><path d="M5 6l3 2-1 4-4 1M21 6l-3 2 1 4 4 1M8 21l2-3h6l2 3" fill="#333"/></svg>
<svg class="a" style="left:624px;top:991px" width="26" height="26" viewBox="0 0 26 26"><path d="M3 14C3 7 8 2 14 2c6 0 10 4 10 9 0 4-3 6-6 6-4 0-5-2-5-4 0-3 3-4 3-4-5 0-9 4-8 9 1 4 5 6 9 6-8 2-14-3-14-10z" fill="#1d8ee6"/><path d="M14 2c6 0 10 4 10 9 0 4-3 6-6 6" fill="none" stroke="#5fd37a" stroke-width="3"/></svg>
<svg class="a" style="left:662px;top:991px" width="26" height="26" viewBox="0 0 26 26"><circle cx="13" cy="13" r="11" fill="#db4437"/><path d="M13 13L2.6 9A11 11 0 0 0 7.5 22.5z" fill="#0f9d58"/><path d="M13 13l5.5 9.5A11 11 0 0 0 24 13z" fill="#fbbc05"/><circle cx="13" cy="13" r="5" fill="#fff"/><circle cx="13" cy="13" r="4" fill="#4285f4"/></svg>
<svg class="a" style="left:699px;top:991px" width="26" height="26" viewBox="0 0 26 26"><circle cx="13" cy="14" r="10.5" fill="#ff7139"/><circle cx="13" cy="14" r="6" fill="#7542e5"/><path d="M4 8c3-6 10-7 14-4-4 0-6 2-6 4" fill="#ffbd4f"/></svg>
<div class="a" style="left:732px;top:984px;width:40px;height:40px;background:#ececec"></div>
<svg class="a" style="left:738px;top:991px" width="26" height="26" viewBox="0 0 26 26"><path d="M8 3h16v20H8z" fill="#fff" stroke="#1e7145"/><path d="M14 6h8M14 10h8M14 14h8M14 18h8M18 4v18" stroke="#1e7145"/><path d="M2 4l12-2v22L2 22z" fill="#1e7145"/><text x="4" y="17" font-size="10" font-weight="bold" fill="#fff" font-family="Liberation Sans">X</text></svg>
<svg class="a" style="left:777px;top:991px" width="26" height="26" viewBox="0 0 26 26"><path d="M8 3h16v20H8z" fill="#fff" stroke="#c43e1c"/><path d="M2 4l13-2v22L2 22z" fill="#d24726"/><text x="4" y="17" font-size="10" font-weight="bold" fill="#fff" font-family="Liberation Sans">P</text><circle cx="19" cy="10" r="3" fill="#d24726"/></svg>
<svg class="a" style="left:815px;top:991px" width="26" height="26" viewBox="0 0 26 26"><circle cx="13" cy="12" r="10" fill="#fff" stroke="#2e8b57" stroke-width="2"/><path d="M3 23l2-6" stroke="#2e8b57" stroke-width="2"/><path d="M9 8c0 5 4 8 8 8l1-2-3-1-1 1c-2-1-3-2-4-4l1-1-1-3z" fill="#2e8b57"/></svg>
<div class="a" style="left:822px;top:1003px;width:19px;height:17px;border-radius:9px;background:#ddd;border:1.5px solid #444"></div>
<div class="t" style="left:825px;top:1004px;font-size:11px;color:#111">30</div>
<svg class="a" style="left:852px;top:991px" width="26" height="26" viewBox="0 0 26 26"><path d="M8 3h16v20H8z" fill="#fff" stroke="#2b579a"/><path d="M14 7h8M14 11h8M14 15h8M14 19h8" stroke="#2b579a"/><path d="M2 4l13-2v22L2 22z" fill="#2b579a"/><text x="3.5" y="17" font-size="10" font-weight="bold" fill="#fff" font-family="Liberation Sans">W</text></svg>
<svg class="a" style="left:890px;top:991px" width="26" height="26" viewBox="0 0 26 26"><path d="M3 14c0-7 6-11 11-11s9 3 9 8c0 3-3 3-5 3-3 0-3 3-2 5 1 3-2 5-5 5-5 0-8-4-8-10z" fill="#cfe3f3" stroke="#7aa" stroke-width="0.8"/><circle cx="8" cy="11" r="2" fill="#e44"/><circle cx="13" cy="7" r="2" fill="#fc3"/><circle cx="18" cy="8" r="2" fill="#3a3"/><circle cx="8" cy="17" r="2" fill="#36c"/><path d="M16 20L25 3" stroke="#c96" stroke-width="2"/></svg>
<div class="a" style="left:429px;top:1021px;width:33px;height:3px;background:#0067c0"></div>
<div class="a" style="left:621px;top:1021px;width:33px;height:3px;background:#0067c0"></div>
<div class="a" style="left:732px;top:1021px;width:40px;height:3px;background:#0067c0"></div>
<div class="a" style="left:888px;top:1021px;width:32px;height:3px;background:#0067c0"></div>
<div class="a" style="left:945px;top:992px;width:25px;height:25px;border-radius:50%;background:#f59b22"></div>
<div class="t" style="left:949px;top:998px;font-size:10px;color:#fff">UV</div>
<div class="t" style="left:978px;top:996px;font-size:14px;color:#222">...</div><div class="t fw" style="--w:20.0px;transform:scaleX(0.561);transform-origin:0 0;left:992px;top:995px;font-size:14px;color:#222"><span class="ar">أشعـ</span></div>
<svg class="a" style="left:1035px;top:996px" width="16" height="17"><rect x="1" y="1" width="14" height="15" rx="2" fill="#fff" stroke="#111" stroke-width="1.6"/><text x="3.5" y="13" font-size="11" font-weight="bold" fill="#111" font-family="Liberation Serif">N</text></svg>
<svg class="a" style="left:1060px;top:996px" width="16" height="16"><rect x="1" y="3" width="10" height="10" rx="3" fill="none" stroke="#222" stroke-width="1.3"/><path d="M11 6l4-2v8l-4-2" fill="none" stroke="#222" stroke-width="1.3"/><circle cx="6" cy="8" r="2" fill="none" stroke="#222"/></svg>
<svg class="a" style="left:1082px;top:996px" width="17" height="16"><rect x="1" y="1" width="14" height="9" fill="none" stroke="#222" stroke-width="1.2"/><path d="M8 10v3M4 14h8" stroke="#222" stroke-width="1.2"/><rect x="0" y="0" width="5" height="4" fill="#222"/></svg>
<svg class="a" style="left:1105px;top:997px" width="17" height="15"><path d="M1 5h3l4-4v13l-4-4H1z" fill="none" stroke="#222" stroke-width="1.2"/><path d="M11 4c1.5 2 1.5 5 0 7M13.5 2c2.5 3 2.5 8 0 11" fill="none" stroke="#999" stroke-width="1.1"/></svg>
<div class="t fw" style="--w:7.0px;transform:scaleX(0.785);transform-origin:0 0;left:1141px;top:997px;font-size:14px;color:#222"><span class="ar">ع</span></div>
<div class="t fw" style="--w:40.6px;transform:scaleX(0.872);transform-origin:0 0;left:1175px;top:988px;font-size:12.5px;color:#222">1:41 PM</div>
<div class="t fw" style="--w:45.0px;transform:scaleX(0.925);transform-origin:0 0;left:1172px;top:1006.5px;font-size:12.5px;color:#222">9/1/2025</div>
<svg class="a" style="left:1240px;top:994px" width="22" height="24"><path d="M1 1h16v12H7l-4 4v-4H1z" fill="#111"/><path d="M4 5h10M4 8h10" stroke="#fff"/><circle cx="14" cy="15" r="7" fill="#ddd" stroke="#333"/><text x="10.5" y="19" font-size="11" fill="#111" font-family="Liberation Sans">8</text></svg>
<svg class="a" style="left:0;top:0" width="1280" height="1024"><g fill="none" stroke="rgba(150,150,150,0.32)" stroke-width="7" stroke-linecap="round" stroke-linejoin="round">
<path d="M572 950C562 968 570 977 584 975C590 974 591 970 591 964V936"/>
<path d="M591 971H688"/>
<circle cx="612" cy="959" r="9"/>
<path d="M634 971V960M653 971V960M671 971V960"/>
<circle cx="700" cy="960" r="12"/>
</g><g fill="rgba(150,150,150,0.32)"><circle cx="609" cy="937" r="4"/><circle cx="621" cy="937" r="4"/><circle cx="637" cy="946" r="4"/><circle cx="649" cy="946" r="4"/></g></svg>
<div class="t fw" style="--w:152.0px;transform:scaleX(0.986);transform-origin:0 0;left:564px;top:980px;font-size:25px;line-height:26px;font-weight:bold;color:rgba(150,150,150,0.2)">mostaql.com</div></div>
<!-- RIBBON -->
<div id="ribbon">
<!-- CLIPBOARD -->
<svg class="a" style="left:12px;top:57px" width="31" height="32" viewBox="0 0 31 32">
 <rect x="1" y="4" width="24" height="25" rx="1.5" fill="#e8c27a"/>
 <path d="M6 10V6h5a3 3 0 0 1 6 0h5v4z" fill="#6d6d6d"/>
 <circle cx="14" cy="6" r="1.2" fill="#fff"/>
 <path d="M15.5 12.5h9l4.5 4.5v13.5h-13.5z" fill="#fff" stroke="#6d6d6d" stroke-width="1.1"/>
 <path d="M24.5 12.5v4.5h4.5" fill="none" stroke="#6d6d6d" stroke-width="1"/>
</svg>
<div class="t" style="left:11px;top:92.5px;font-size:12px;color:#444">Paste</div>
<div class="dd" style="left:22px;top:113px"></div>
<svg class="a" style="left:49px;top:55px" width="16" height="17" viewBox="0 0 16 17">
 <path d="M4 1l7 10M12 1L5 11" stroke="#555" stroke-width="1.4"/>
 <circle cx="4" cy="13.5" r="2.5" fill="none" stroke="#3a78c9" stroke-width="1.3"/>
 <circle cx="12" cy="13.5" r="2.5" fill="none" stroke="#3a78c9" stroke-width="1.3"/>
</svg>
<svg class="a" style="left:48px;top:79px" width="18" height="16" viewBox="0 0 18 16">
 <path d="M1.5 1.5h6l1 1v9h-7z" fill="#fff" stroke="#666"/>
 <path d="M7.5 4.5h6l2.5 2.5v8.5h-8.5z" fill="#fff" stroke="#666"/>
 <path d="M3 5h3M3 7.5h3M9.5 9h5M9.5 11h5M9.5 13h5" stroke="#3a78c9"/>
</svg>
<div class="dd" style="left:71px;top:87px"></div>
<svg class="a" style="left:49px;top:102px" width="17" height="16" viewBox="0 0 17 16">
 <path d="M9 7l6-6 2 2-6 6z" fill="#555"/>
 <path d="M1 13l6-7 4 4-7 6z" fill="#e8c27a"/>
</svg>
<div class="gl" style="left:10px;top:128px">Clipboard</div>
<svg class="a" style="left:74px;top:131px" width="8" height="8" viewBox="0 0 8 8"><path d="M0.5 0.5h6v6" fill="none" stroke="#888"/><path d="M2 2l4 4M3.5 6h2.5v-2.5" fill="none" stroke="#888"/></svg>
<div class="sep" style="left:85px"></div>
<!-- FONT -->
<div class="a" style="left:90px;top:61px;width:111px;height:23px;border:1px solid #c6c6c6;background:#fff"></div>
<div class="a" style="left:200px;top:61px;width:44px;height:23px;border:1px solid #c6c6c6;background:#fff"></div>
<div class="t" style="left:93px;top:66px;color:#222;font-size:12px">Calibri</div>
<div class="dd" style="left:190px;top:72px"></div>
<div class="t" style="left:204px;top:66px;color:#222;font-size:12px">11</div>
<div class="dd" style="left:233px;top:72px"></div>
<div class="t" style="left:250px;top:64px;font-size:15px;color:#555">A</div>
<svg class="a" style="left:259px;top:64px" width="6" height="4"><path d="M0 4l3-3 3 3z" fill="#3a78c9"/></svg>
<div class="t" style="left:273px;top:67px;font-size:12px;color:#555">A</div>
<svg class="a" style="left:280px;top:64px" width="6" height="4"><path d="M0 0h6l-3 3z" fill="#3a78c9"/></svg>
<div class="t" style="left:95px;top:96px;font-size:13px;font-weight:bold;color:#444">B</div>
<div class="t" style="left:118px;top:96px;font-size:13px;font-style:italic;font-family:'Liberation Serif',serif;color:#444">I</div>
<div class="t" style="left:139px;top:96px;font-size:13px;text-decoration:underline;color:#444">U</div>
<div class="dd" style="left:158px;top:103px"></div>
<div class="a" style="left:172px;top:92px;width:1px;height:22px;background:#e1e1e1"></div>
<svg class="a" style="left:180px;top:95px" width="15" height="15" viewBox="0 0 15 15"><path d="M1 1h13v13H1zM7.5 1v13M1 7.5h13" fill="none" stroke="#999" stroke-dasharray="1 1"/><path d="M0 14.5h15" stroke="#666"/></svg>
<div class="dd" style="left:201px;top:103px"></div>
<div class="a" style="left:215px;top:92px;width:1px;height:22px;background:#e1e1e1"></div>
<svg class="a" style="left:222px;top:94px" width="18" height="17" viewBox="0 0 18 17">
 <path d="M3 7l5-5 6 6-5 5z" fill="#fff" stroke="#555"/><path d="M14 8c2 1 2 3 1 4" stroke="#3a78c9" stroke-width="1.5" fill="none"/>
 <rect x="1" y="13" width="16" height="4" fill="#ffff00"/>
</svg>
<div class="dd" style="left:244px;top:103px"></div>
<svg class="a" style="left:257px;top:94px" width="17" height="17" viewBox="0 0 17 17">
 <path d="M3 12L8.5 1 14 12M5 8h7" fill="none" stroke="#555" stroke-width="1.6"/>
 <rect x="0" y="13" width="17" height="4" fill="#e00"/>
</svg>
<div class="dd" style="left:278px;top:103px"></div>
<div class="gl" style="left:169px">Font</div>
<svg class="a" style="left:281px;top:131px" width="8" height="8" viewBox="0 0 8 8"><path d="M0.5 0.5h6v6" fill="none" stroke="#888"/><path d="M2 2l4 4M3.5 6h2.5v-2.5" fill="none" stroke="#888"/></svg>
<div class="sep" style="left:292px"></div>
<!-- ALIGNMENT -->
<svg class="a" style="left:300px;top:64px" width="16" height="10"><path d="M0 1.5h16M2 4.5h12M0 7.5h16" stroke="#666"/></svg>
<svg class="a" style="left:322px;top:67px" width="16" height="10"><path d="M0 1.5h16M2 4.5h12M0 7.5h16" stroke="#666"/></svg>
<div class="a" style="left:341px;top:61px;width:22px;height:23px;background:#a7dab8"></div>
<svg class="a" style="left:344px;top:72px" width="16" height="10"><path d="M1 1.5h14M1 4.5h14M1 7.5h14" stroke="#555"/></svg>
<div class="a" style="left:367px;top:61px;width:1px;height:22px;background:#e1e1e1"></div>
<svg class="a" style="left:374px;top:63px" width="20" height="17" viewBox="0 0 20 17"><text x="1" y="11" font-size="10" fill="#555" transform="rotate(-40 6 8)" font-family="Liberation Sans">ab</text><path d="M4 15l12-10M13 5h3v3" fill="none" stroke="#555"/></svg>
<div class="dd" style="left:395px;top:71px"></div>
<div class="a" style="left:409px;top:61px;width:1px;height:22px;background:#e1e1e1"></div>
<svg class="a" style="left:418px;top:65px" width="20" height="12" viewBox="0 0 20 12"><path d="M1 1l4 4-4 4z" fill="#3a78c9"/><text x="6" y="10" font-size="11" fill="#555" font-family="Liberation Sans">¶</text></svg>
<div class="dd" style="left:439px;top:71px"></div>
<div class="a" style="left:452px;top:61px;width:1px;height:54px;background:#e1e1e1"></div>
<svg class="a" style="left:460px;top:63px" width="18" height="16" viewBox="0 0 18 16"><path d="M0.5 0.5h9v3h-9zM0.5 12.5h9v3h-9z" fill="#fff" stroke="#666"/><path d="M3 6.5h8M3 9.5h6" stroke="#3a78c9"/><path d="M14 3v4a2 2 0 0 1-2 2h-3M11 7.5l-2 1.5 2 1.5" fill="none" stroke="#3a78c9"/></svg>
<div class="t" style="left:479px;top:66px;font-size:12px;color:#444">Wrap Text</div>
<svg class="a" style="left:300px;top:97px" width="16" height="12"><path d="M0 1.5h16M0 5.5h11M0 9.5h16" stroke="#666"/></svg>
<svg class="a" style="left:322px;top:97px" width="16" height="12"><path d="M0 1.5h16M3 5.5h10M0 9.5h16" stroke="#666"/></svg>
<svg class="a" style="left:344px;top:97px" width="16" height="12"><path d="M0 1.5h16M5 5.5h11M0 9.5h16" stroke="#666"/></svg>
<div class="a" style="left:367px;top:92px;width:1px;height:22px;background:#e1e1e1"></div>
<svg class="a" style="left:374px;top:96px" width="17" height="13"><path d="M6 1.5h11M8 6.5h9M6 11.5h11" stroke="#666"/><path d="M1 6.5h6M4 3.5l-3 3 3 3" fill="none" stroke="#3a78c9" stroke-width="1.4"/></svg>
<svg class="a" style="left:396px;top:96px" width="17" height="13"><path d="M6 1.5h11M8 6.5h9M6 11.5h11" stroke="#666"/><path d="M0 6.5h6M3 3.5l3 3-3 3" fill="none" stroke="#3a78c9" stroke-width="1.4"/></svg>
<svg class="a" style="left:460px;top:95px" width="16" height="16" viewBox="0 0 16 16"><rect x="0.5" y="0.5" width="15" height="15" fill="#fff" stroke="#666"/><path d="M0.5 4.5h15M0.5 11.5h15M8 0.5v4M8 11.5v4" stroke="#666"/><path d="M3 8h10M5 6l-2 2 2 2M11 6l2 2-2 2" fill="none" stroke="#3a78c9"/></svg>
<div class="t" style="left:479px;top:97px;font-size:12px;color:#444">Merge &amp; Center</div>
<div class="dd" style="left:573px;top:103px"></div>
<div class="gl" style="left:405px">Alignment</div>
<svg class="a" style="left:575px;top:131px" width="8" height="8" viewBox="0 0 8 8"><path d="M0.5 0.5h6v6" fill="none" stroke="#888"/><path d="M2 2l4 4M3.5 6h2.5v-2.5" fill="none" stroke="#888"/></svg>
<div class="sep" style="left:588px"></div>
<!-- NUMBER -->
<div class="a" style="left:593px;top:61px;width:131px;height:22px;border:1px solid #c6c6c6;background:#fff"></div>
<div class="t" style="left:596px;top:66px;color:#222;font-size:12px">General</div>
<div class="dd" style="left:713px;top:71px"></div>
<div class="t" style="left:599px;top:95px;font-size:15px;color:#555">$</div>
<div class="dd" style="left:617px;top:103px"></div>
<div class="t" style="left:631px;top:96px;font-size:14px;color:#555">%</div>
<div class="t" style="left:657px;top:92px;font-size:16px;color:#555;font-weight:bold">,</div>
<div class="a" style="left:675px;top:92px;width:1px;height:22px;background:#e1e1e1"></div>
<svg class="a" style="left:681px;top:96px" width="18" height="13" viewBox="0 0 18 13"><text x="7" y="6" font-size="7" fill="#444" font-family="Liberation Sans">.0</text><text x="4" y="12.5" font-size="7" fill="#444" font-family="Liberation Sans">.00</text><path d="M1 3h6M3 1l-2 2 2 2" fill="none" stroke="#3a78c9"/></svg>
<svg class="a" style="left:703px;top:96px" width="18" height="13" viewBox="0 0 18 13"><text x="5" y="6" font-size="7" fill="#444" font-family="Liberation Sans">.00</text><text x="8" y="12.5" font-size="7" fill="#444" font-family="Liberation Sans">.0</text><path d="M1 10h6M5 8l2 2-2 2" fill="none" stroke="#3a78c9"/></svg>
<div class="gl" style="left:630px">Number</div>
<svg class="a" style="left:717px;top:131px" width="8" height="8" viewBox="0 0 8 8"><path d="M0.5 0.5h6v6" fill="none" stroke="#888"/><path d="M2 2l4 4M3.5 6h2.5v-2.5" fill="none" stroke="#888"/></svg>
<div class="sep" style="left:729px"></div>

<!-- STYLES -->
<svg class="a" style="left:755px;top:57px" width="31" height="31" viewBox="0 0 31 31">
 <path d="M0.5 0.5h27v25h-27zM0.5 6.5h27M0.5 12.5h27M0.5 18.5h27M7.5 0.5v25M14.5 0.5v25M21.5 0.5v25" fill="#fff" stroke="#777"/>
 <rect x="1" y="1" width="6" height="5" fill="#e84c3d"/><rect x="1" y="7" width="13" height="5" fill="#3a78c9"/><rect x="1" y="13" width="9" height="5" fill="#e84c3d"/><rect x="1" y="19" width="5" height="6" fill="#3a78c9"/>
 <rect x="14.5" y="17.5" width="15" height="12" fill="#fff" stroke="#555"/>
 <text x="18" y="28" font-size="11" fill="#333" font-family="Liberation Sans">≠</text>
</svg>
<div class="t" style="left:738px;top:92px;font-size:12px;color:#444">Conditional</div>
<div class="t" style="left:735px;top:108px;font-size:12px;color:#444">Formatting</div>
<div class="dd" style="left:796px;top:114px"></div>
<svg class="a" style="left:820px;top:57px" width="30" height="31" viewBox="0 0 30 31">
 <path d="M0.5 3.5h24v19h-24zM0.5 8.5h24M0.5 13.5h24M0.5 18.5h24M6.5 3.5v19M12.5 3.5v19M18.5 3.5v19" fill="#fff" stroke="#888"/>
 <rect x="7" y="9" width="17" height="13" fill="#bcd3ea"/>
 <path d="M7 9h17M7 14h17M7 18h17M12.5 9v13M18.5 9v13" stroke="#99b" stroke-width="0.5"/>
 <path d="M27 4l3 3-10 12-3-3z" fill="#888"/>
 <path d="M17 18c-3 0-5 3-7 11 6-1 9-4 10-8z" fill="#3a78c9"/>
</svg>
<div class="t" style="left:807px;top:92px;font-size:12px;color:#444">Format as</div>
<div class="t" style="left:816px;top:108px;font-size:12px;color:#444">Table</div>
<div class="dd" style="left:846px;top:114px"></div>
<svg class="a" style="left:870px;top:57px" width="30" height="31" viewBox="0 0 30 31">
 <path d="M0.5 3.5h24v19h-24zM0.5 8.5h24M6.5 3.5v19" fill="#fff" stroke="#888"/>
 <rect x="7" y="9" width="17" height="13" fill="#bcd3ea"/>
 <path d="M27 4l3 3-10 12-3-3z" fill="#888"/>
 <path d="M17 18c-3 0-5 3-7 11 6-1 9-4 10-8z" fill="#3a78c9"/>
</svg>
<div class="t" style="left:873px;top:92px;font-size:12px;color:#444">Cell</div>
<div class="t" style="left:864px;top:108px;font-size:12px;color:#444">Styles</div>
<div class="dd" style="left:897px;top:114px"></div>
<div class="gl" style="left:804px">Styles</div>
<div class="sep" style="left:909px"></div>
<!-- CELLS -->
<svg class="a" style="left:921px;top:57px" width="30" height="30" viewBox="0 0 30 30">
 <path d="M0.5 0.5h14v5h-14zM7.5 0.5v5M0.5 19.5h14v10h-14zM0.5 24.5h14M7.5 19.5v10" fill="#fff" stroke="#666"/>
 <path d="M11.5 9.5h16v6h-16zM19.5 9.5v6" fill="#bcd3ea" stroke="#666"/>
 <path d="M2 12.5h7M5 9.5l-3 3 3 3" fill="none" stroke="#3a78c9" stroke-width="1.5"/>
</svg>
<div class="t" style="left:920px;top:92px;font-size:12px;color:#444">Insert</div>
<div class="dd" style="left:931px;top:113px"></div>
<svg class="a" style="left:962px;top:57px" width="32" height="30" viewBox="0 0 32 30">
 <path d="M0.5 0.5h14v5h-14zM7.5 0.5v5M0.5 19.5h14v10h-14zM0.5 24.5h14M7.5 19.5v10" fill="#fff" stroke="#666"/>
 <path d="M0.5 9.5h14v6h-14z" fill="#bcd3ea" stroke="#666"/>
 <path d="M15 10l14 13M29 6L15 22" stroke="#e8533b" stroke-width="2.2"/>
</svg>
<div class="t" style="left:960px;top:92px;font-size:12px;color:#444">Delete</div>
<div class="dd" style="left:973px;top:113px"></div>
<svg class="a" style="left:1004px;top:56px" width="31" height="32" viewBox="0 0 31 32">
 <path d="M1 4h27M1 1v6M28 1v6M4 2l-3 2 3 2M25 2l3 2-3 2" fill="none" stroke="#3a78c9"/>
 <path d="M0.5 9.5h28v20h-28zM0.5 14.5h28M0.5 19.5h28M0.5 24.5h28M7.5 9.5v20M14.5 9.5v20M21.5 9.5v20" fill="#fff" stroke="#888"/>
 <rect x="8" y="15" width="6" height="9" fill="#3a78c9"/>
</svg>
<div class="t" style="left:1000px;top:92px;font-size:12px;color:#444">Format</div>
<div class="dd" style="left:1016px;top:113px"></div>
<div class="gl" style="left:965px">Cells</div>
<div class="sep" style="left:1045px"></div>
<!-- EDITING -->
<svg class="a" style="left:1053px;top:56px" width="15" height="15" viewBox="0 0 15 15"><path d="M14 3V1H1.5l6 6.5-6 6.5H14v-2" fill="none" stroke="#444" stroke-width="2"/></svg>
<div class="t" style="left:1072px;top:58px;font-size:12px;color:#444">AutoSum</div>
<div class="dd" style="left:1131px;top:63px"></div>
<svg class="a" style="left:1054px;top:79px" width="15" height="16" viewBox="0 0 15 16"><rect x="0.5" y="0.5" width="14" height="15" fill="#fff" stroke="#666"/><rect x="0" y="0" width="15" height="3" fill="#666"/><path d="M7.5 5v8M4 9.5l3.5 3.5 3.5-3.5" fill="none" stroke="#3a78c9" stroke-width="1.6"/></svg>
<div class="t" style="left:1072px;top:81px;font-size:12px;color:#444">Fill</div>
<div class="dd" style="left:1090px;top:87px"></div>
<svg class="a" style="left:1054px;top:103px" width="15" height="14" viewBox="0 0 15 14"><path d="M1 9l7-8 6 5-7 7H3z" fill="#e06666"/><path d="M1 13.5h13" stroke="#666"/></svg>
<div class="t" style="left:1072px;top:104px;font-size:12px;color:#444">Clear</div>
<div class="dd" style="left:1101px;top:110px"></div>
<svg class="a" style="left:1146px;top:58px" width="32" height="29" viewBox="0 0 32 29">
 <text x="0" y="13" font-size="14" fill="#3a78c9" font-family="Liberation Sans">A</text>
 <text x="1" y="28" font-size="14" fill="#8d3fb5" font-family="Liberation Sans">Z</text>
 <path d="M12 7h19l-7 8v9h-4v-9z" fill="#777"/>
</svg>
<div class="t" style="left:1146px;top:92px;font-size:12px;color:#444">Sort &amp;</div>
<div class="t" style="left:1146px;top:108px;font-size:12px;color:#444">Filter</div>
<div class="dd" style="left:1175px;top:114px"></div>
<svg class="a" style="left:1193px;top:59px" width="27" height="25" viewBox="0 0 27 25">
 <path d="M3 4h6v-3h0v3zM18 1h6v4h-6z" fill="#666"/>
 <path d="M1 9l3-6h5v22H1zM26 9l-3-6h-5v22h8z" fill="#666"/>
 <rect x="9" y="8" width="9" height="8" fill="#666"/>
</svg>
<div class="t" style="left:1188px;top:92px;font-size:12px;color:#444">Find &amp;</div>
<div class="t" style="left:1186px;top:108px;font-size:12px;color:#444">Select</div>
<div class="dd" style="left:1219px;top:114px"></div>
<div class="gl" style="left:1120px">Editing</div>
<div class="sep" style="left:1232px"></div>
<svg class="a" style="left:1261px;top:130px" width="9" height="6"><path d="M1 5l3.5-3.5L8 5" fill="none" stroke="#555" stroke-width="1.5"/></svg>
<!-- FORMULA BAR -->
<div class="a" style="left:5px;top:153px;width:102px;height:26px;border:1px solid #c6c6c6"></div>
<div class="t" style="left:12px;top:159px;font-size:13px;color:#333">A5</div>
<div class="dd" style="left:93px;top:164px;border-left-width:4px;border-right-width:4px;border-top-width:4px"></div>
<div class="a" style="left:121px;top:161px;width:2px;height:2px;background:#999"></div>
<div class="a" style="left:121px;top:165px;width:2px;height:2px;background:#999"></div>
<div class="a" style="left:121px;top:169px;width:2px;height:2px;background:#999"></div>
<div class="a" style="left:137px;top:153px;width:110px;height:26px;border:1px solid #c6c6c6"></div>
<svg class="a" style="left:150px;top:161px" width="10" height="10"><path d="M1 1l8 8M9 1L1 9" stroke="#aaa" stroke-width="1.3"/></svg>
<svg class="a" style="left:185px;top:161px" width="13" height="10"><path d="M1 5l4 4 7-8" fill="none" stroke="#bbb" stroke-width="2"/></svg>
<div class="t" style="left:222px;top:158px;font-size:13px;font-style:italic;font-family:'Liberation Serif',serif;color:#555;font-weight:bold">f<span style="font-size:10px">x</span></div>
<div class="a" style="left:250px;top:153px;width:1025px;height:26px;border:1px solid #c6c6c6"></div>
<div class="t fw" style="--w:41.0px;transform:scaleX(0.707);transform-origin:0 0;left:1210px;top:159px;font-size:13px;color:#222"><span class="ar">المندوب</span></div>
<svg class="a" style="left:1261px;top:162px" width="10" height="7"><path d="M1 1l4 4 4-4" fill="none" stroke="#555" stroke-width="1.5"/></svg>
</div>
<div class="a" style="left:0;top:142px;width:1280px;height:1px;background:#d4d4d4"></div>
<script>
(function(){
var ab=document.querySelectorAll('.ab>span'),fw=document.querySelectorAll('.fw'),i,a=[],b=[];
for(i=0;i<ab.length;i++)ab[i].style.transform='none';
for(i=0;i<fw.length;i++)fw[i].style.transform='none';
for(i=0;i<ab.length;i++)a.push(ab[i].getBoundingClientRect().width);
for(i=0;i<ab.length;i++){var W=parseFloat(ab[i].parentNode.style.width);if(a[i]>0)ab[i].style.transform='scaleX('+(W/a[i])+')';}
for(i=0;i<fw.length;i++)b.push(fw[i].getBoundingClientRect().width);
for(i=0;i<fw.length;i++){var T=parseFloat(fw[i].style.getPropertyValue('--w'));if(b[i]>0)fw[i].style.transform='scaleX('+(T/b[i])+')';}
})();
</script>
</body></html>
